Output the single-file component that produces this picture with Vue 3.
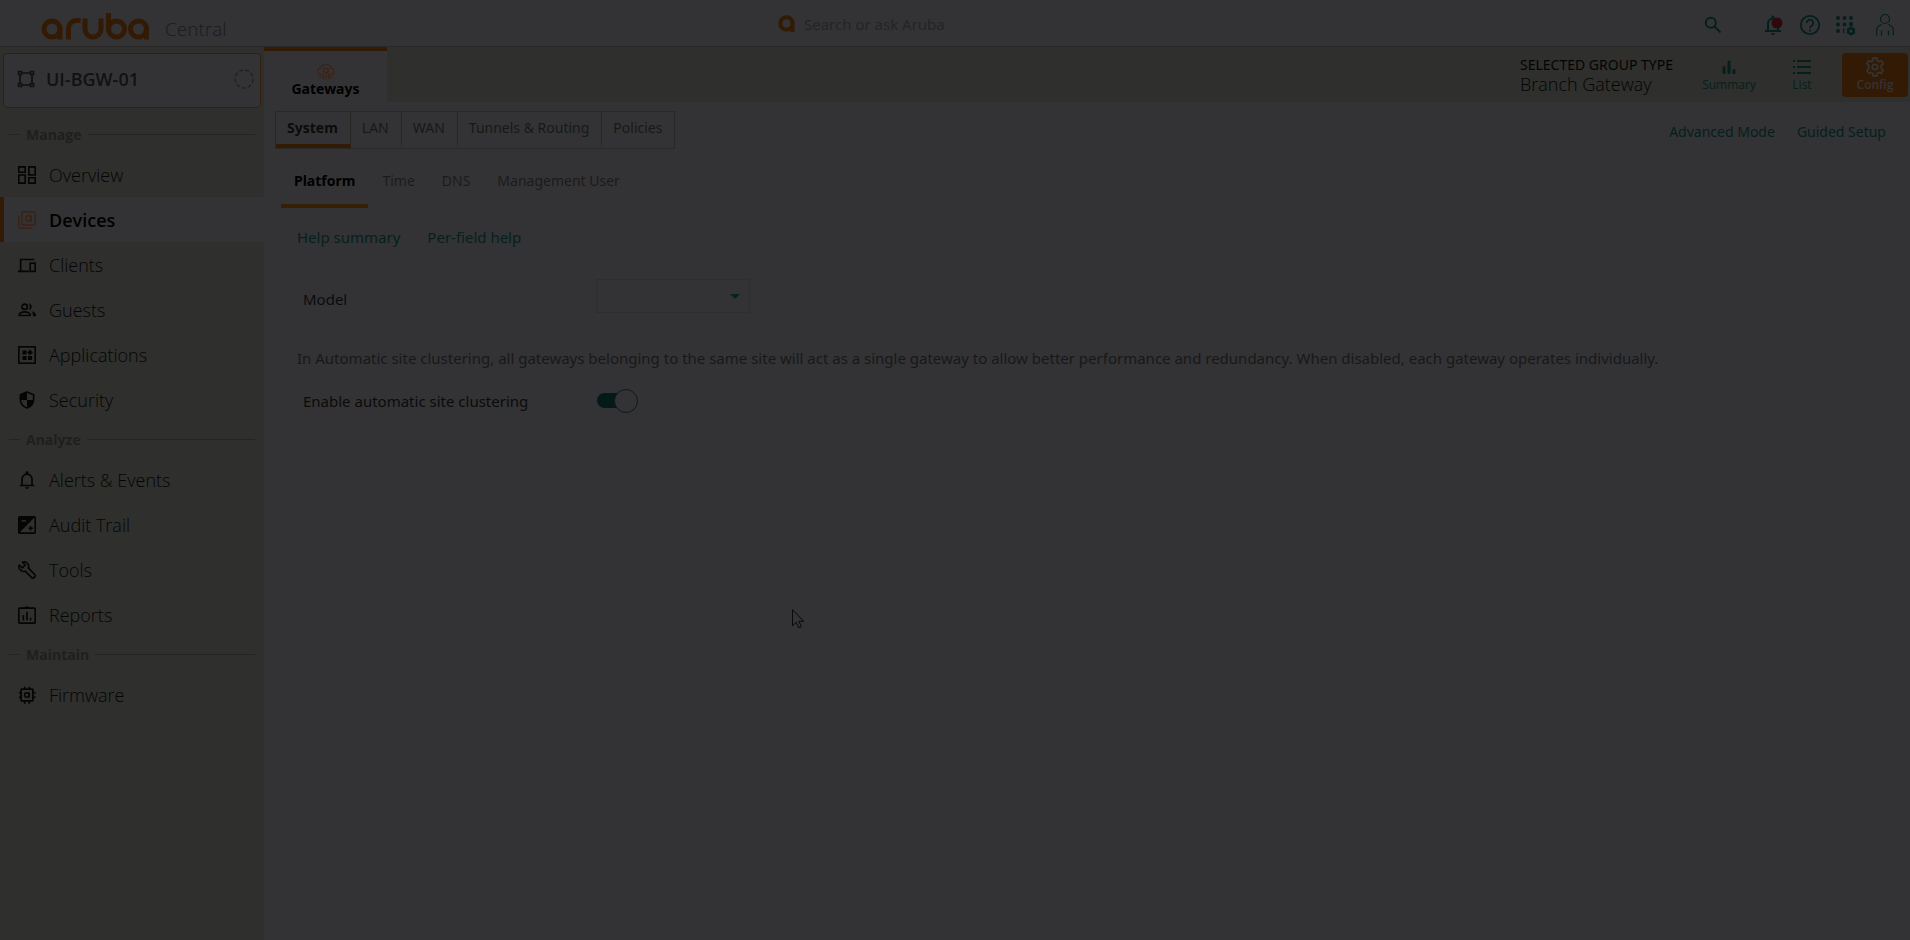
<script setup>
import { ref } from 'vue'

const groups = [
  {
    title: 'Manage',
    items: [
      { name: 'Overview', icon: 'overview' },
      { name: 'Devices', icon: 'devices', active: true },
      { name: 'Clients', icon: 'clients' },
      { name: 'Guests', icon: 'guests' },
      { name: 'Applications', icon: 'applications' },
      { name: 'Security', icon: 'security' },
    ],
  },
  {
    title: 'Analyze',
    items: [
      { name: 'Alerts & Events', icon: 'alerts' },
      { name: 'Audit Trail', icon: 'audit' },
      { name: 'Tools', icon: 'tools' },
      { name: 'Reports', icon: 'reports' },
    ],
  },
  { title: 'Maintain', items: [{ name: 'Firmware', icon: 'firmware' }] },
]

const icons = {
  overview:
    '<g fill="none" stroke="currentColor" stroke-width="1.800"><path d="M2 2h7v6H2zM13 2h7v9h-7zM2 11h7v9H2zM13 14h7v6h-7z"/></g>',
  devices:
    '<g fill="none" stroke="currentColor" stroke-width="1.6"><rect x="5.5" y="2" width="14.5" height="14.5" rx="1.5"/><path d="M2 6v12.5a1.5 1.5 0 0 0 1.5 1.5H16"/><circle cx="12.5" cy="9.3" r="3"/><path d="M15.6 6v6.8"/></g>',
  clients:
    '<g fill="none" stroke="currentColor" stroke-width="1.800"><path d="M19 5H4v12M1 18h12"/><rect x="14.5" y="9" width="5.5" height="9"/></g>',
  guests:
    '<g fill="none" stroke="currentColor" stroke-width="1.800"><circle cx="8.5" cy="7.5" r="3"/><path d="M2.500 17v-1c0-1.500 3-3 6-3s6 1.500 6 3v1z"/></g><path fill="currentColor" d="M13 3.600a4 4 0 0 1 0 7.800c1.500-2.300 1.500-5.500 0-7.800zM15.800 12.300c2.700.5 5 1.800 5 3.700v2h-3.300v-2c0-1.500-.6-2.700-1.700-3.700z"/>',
  applications:
    '<rect x="2" y="2" width="18" height="18" fill="none" stroke="currentColor" stroke-width="1.800"/><path fill="currentColor" d="M6 6h4.500v4.500H6zM6 12h4.500v4.500H6zM12 12h4.500v4.500H12zM14.300 5l3.200 3.200-3.200 3.200-3.200-3.200z"/>',
  security:
    '<path fill="none" stroke="currentColor" stroke-width="1.800" d="M11 2.200l7.300 3V10c0 4.500-3 8.400-7.300 9.800C6.700 18.400 3.700 14.500 3.700 10V5.200z"/><path fill="currentColor" d="M11 2v9H3.500V5zM11 11h7.300c-.5 4.400-3.500 7.900-7.300 9z"/>',
  alerts:
    '<path fill="none" stroke="currentColor" stroke-width="1.800" d="M3 17h16M5.500 17V10a5.500 5.500 0 0 1 11 0v7"/><path fill="currentColor" d="M9.500 4.500V3a1.500 1.500 0 0 1 3 0v1.500zM9 19h4a2 2 0 0 1-4 0z"/>',
  audit:
    '<rect x="2" y="2" width="18" height="18" rx="1" fill="none" stroke="currentColor" stroke-width="1.800"/><path fill="currentColor" d="M2 2h18L2 20z"/><path stroke="#2f2f2d" stroke-width="1.600" d="M5 6.500h5"/><path stroke="currentColor" stroke-width="1.600" d="M12.500 14.500h5M15 12v5"/>',
  tools:
    '<path fill="none" stroke="currentColor" stroke-width="1.800" stroke-linejoin="round" d="M6 2.500c2.500-1 5.500.2 6.500 2.700.5 1.300.5 2.500 0 3.700l7.300 7.300c.5.500.5 1.300 0 1.800l-1.600 1.600c-.5.500-1.300.500-1.800 0L9 12.300c-1.200.4-2.500.4-3.700-.1C2.600 11 1.400 8 2.500 5.500l3.300 3.300L9 5.600z"/>',
  reports:
    '<rect x="2" y="3.500" width="18" height="16.500" rx="1" fill="none" stroke="currentColor" stroke-width="1.800"/><path fill="currentColor" d="M7.500 4.500L8.500 2h1.200a1.500 1.500 0 0 1 2.600 0h1.200l1 2.500z"/><path stroke="currentColor" stroke-width="1.800" d="M7 11v6M11 7.500V17M15 14v3"/>',
  firmware:
    '<g fill="none" stroke="currentColor" stroke-width="2"><rect x="4.500" y="4.500" width="13" height="13" rx="1"/></g><path stroke="currentColor" stroke-width="1.800" d="M8.500 2v2M13.500 2v2M8.500 18v2.500M13.500 18v2.500M2 8.500h2M2 13.500h2M18 8.500h2.500M18 13.500h2.500"/><g fill="none" stroke="currentColor" stroke-width="1.500"><circle cx="10.800" cy="11" r="2.500"/><path d="M13.500 8.200v5.600"/></g>',
}

const sections = ['System', 'LAN', 'WAN', 'Tunnels & Routing', 'Policies']
const pages = ['Platform', 'Time', 'DNS', 'Management User']
const clustering = ref(true)
const model = ref('')
</script>

<template>
  <div class="app">
    <header class="topbar">
      <a class="brand" href="#" aria-label="Aruba Central">
        <svg class="logo" width="110" height="28" viewBox="0 0 110 28" fill="none" stroke="currentColor" stroke-width="5">
          <circle cx="11" cy="16" r="8" />
          <path d="M19 14v12.500M27.500 26.500V15.500a8 8 0 0 1 8-8h4M44 5.500V16a8 8 0 0 0 16 0V5.500M67.500 0v16" />
          <circle cx="75.500" cy="16" r="8" />
          <circle cx="97.500" cy="16" r="8" />
          <path d="M105.500 14v12.500" />
        </svg>
        <span class="product">Central</span>
      </a>
      <label class="search">
        <svg width="18" height="18" viewBox="0 0 18 18" fill="none" stroke="currentColor" stroke-width="4">
          <circle cx="8.500" cy="8.500" r="6.200" />
          <path d="M14.500 8v9" />
        </svg>
        <input type="text" placeholder="Search or ask Aruba" aria-label="Search or ask Aruba" />
      </label>
      <div class="actions">
        <button class="find" aria-label="Search">
          <svg width="18" height="18" viewBox="0 0 18 18" fill="none" stroke="currentColor" stroke-width="2">
            <circle cx="6.800" cy="6.800" r="5" />
            <path d="M10.500 10.500l6 6" />
          </svg>
        </button>
        <button class="bell" aria-label="Notifications">
          <svg width="20" height="22" viewBox="0 0 20 22">
            <path fill="none" stroke="currentColor" stroke-width="2" d="M1 17h16M4 17V9.500a5 5 0 0 1 10 0V17" />
            <path fill="currentColor" d="M7.600 4V3a1.400 1.400 0 0 1 2.800 0v1zM7 19h4a2 2 0 0 1-4 0z" />
            <circle class="alert-dot" cx="13" cy="9" r="5.500" />
          </svg>
        </button>
        <button class="help" aria-label="Help">
          <svg width="22" height="22" viewBox="0 0 22 22" fill="none" stroke="currentColor" stroke-width="1.800">
            <circle cx="11" cy="11" r="9.200" />
            <path d="M7.800 9a3.200 3.200 0 1 1 5.200 2.400c-1.200.9-2 1.300-2 2.900M11 15.500v2" />
          </svg>
        </button>
        <button class="apps" aria-label="Account apps">
          <svg width="22" height="22" viewBox="0 0 22 22" fill="currentColor">
            <circle v-for="n in 7" :key="n" :cx="3 + ((n - 1) % 3) * 6.500" :cy="4 + Math.floor((n - 1) / 3) * 6.500" r="2" />
            <path d="M8 14.500a2.200 2.200 0 0 1 1.800.6l-.8 1.400.8 1.900a2.200 2.200 0 0 1-1.800.5z" />
            <path d="M14 9.500a2 2 0 0 1 3.800 0z" />
            <circle cx="16" cy="17" r="2.800" fill="none" stroke="currentColor" stroke-width="2.400" />
            <path fill="none" stroke="currentColor" stroke-width="2" d="M16 12.500v2M16 19.500v2M12.100 14.800l1.700 1M18.200 18.200l1.700 1M12.100 19.200l1.700-1M18.200 15.800l1.700-1" />
          </svg>
        </button>
        <button class="user" aria-label="User">
          <svg width="20" height="24" viewBox="0 0 20 24" fill="none" stroke="currentColor" stroke-width="1.200">
            <circle cx="10" cy="6" r="4.500" />
            <path d="M1.700 22.500v-5c0-3 2-5 5-6M18.300 22.500v-5c0-3-2-5-5-6M6.500 17.500v5M13.500 17.500v5" />
          </svg>
        </button>
      </div>
    </header>

    <div class="body">
      <aside class="sidebar">
        <button class="group-picker">
          <svg width="18" height="18" viewBox="0 0 18 18" fill="none" stroke="currentColor" stroke-width="1.700">
            <path d="M1.500 1.500h3v3h-3zM13.500 1.500h3v3h-3zM1.500 13.500h3v3h-3zM13.500 13.500h3v3h-3zM4.500 3h9M4.500 15h9M3 4.500v9M15 4.500v9" />
          </svg>
          <span class="group-name">UI-BGW-01</span>
          <svg class="status" width="20" height="20" viewBox="0 0 20 20" fill="none" stroke="currentColor" stroke-width="1.200" stroke-dasharray="4 2.200">
            <circle cx="10" cy="10" r="9" />
          </svg>
        </button>
        <nav aria-label="Main">
          <section v-for="group in groups" :key="group.title">
            <h2>{{ group.title }}</h2>
            <a v-for="item in group.items" :key="item.name" href="#" class="nav-item" :class="{ active: item.active }">
              <svg width="20" height="20" viewBox="0 0 22 22" v-html="icons[item.icon]"></svg>
              <span>{{ item.name }}</span>
            </a>
          </section>
        </nav>
      </aside>

      <main>
        <div class="context">
          <button class="context-tab">
            <svg width="18" height="16" viewBox="0 0 18 16" fill="none" stroke="currentColor" stroke-width="1.100">
              <path d="M6 10.500H4.200a3.200 3.200 0 0 1-.3-6.400C4.500 2 6.500.8 9 .8s4.500 1.300 5 3.300a3.200 3.200 0 0 1-.2 6.400H12" />
              <circle cx="9" cy="6.500" r="2.300" />
              <path d="M11.300 4.200v4.600M9 10v5.500M6.500 10.500V13H2M11.500 10.500V13H16M6.500 13v2M11.500 13v2" />
            </svg>
            <span>Gateways</span>
          </button>
          <div class="context-right">
            <div class="group-type">
              <span class="type-label">SELECTED GROUP TYPE</span>
              <span class="type-value">Branch Gateway</span>
            </div>
            <button class="view">
              <svg width="20" height="20" viewBox="0 0 20 20" stroke="currentColor" stroke-width="3" stroke-linecap="round">
                <path d="M5 10.500v5M10 5v10.500M15 13.500v2" />
              </svg>
              <span>Summary</span>
            </button>
            <button class="view">
              <svg width="20" height="20" viewBox="0 0 20 20" stroke="currentColor" stroke-width="2">
                <path d="M1 4h2M1 10h2M1 16h2M5 4h14M5 10h14M5 16h14" />
              </svg>
              <span>List</span>
            </button>
            <button class="view selected">
              <svg width="20" height="20" viewBox="0 0 20 20" fill="none" stroke="currentColor" stroke-width="1.800" stroke-linejoin="round">
                <path d="M8.200 1h3.600l.4 2.500 1.900 1.100 2.300-1 1.800 3.200-1.900 1.500v3.400l1.900 1.500-1.800 3.200-2.300-1-1.900 1.100-.4 2.500H8.200l-.4-2.500-1.900-1.100-2.300 1-1.800-3.200 1.900-1.500V8.300L1.800 6.800l1.800-3.200 2.300 1 1.900-1.100z" />
                <circle cx="10" cy="10" r="2.700" />
              </svg>
              <span>Config</span>
            </button>
          </div>
        </div>

        <div class="section-row">
          <nav class="sections" aria-label="Sections">
            <button v-for="(s, i) in sections" :key="s" :class="{ active: i === 0 }">{{ s }}</button>
          </nav>
          <div class="modes">
            <a href="#">Advanced Mode</a>
            <a href="#">Guided Setup</a>
          </div>
        </div>

        <nav class="pages" aria-label="Pages">
          <button v-for="(p, i) in pages" :key="p" :class="{ active: i === 0 }">{{ p }}</button>
        </nav>

        <div class="content">
          <div class="help-links">
            <a href="#">Help summary</a>
            <a href="#">Per-field help</a>
          </div>
          <div class="field model">
            <label for="model">Model</label>
            <div class="select-box">
              <select id="model" v-model="model"><option value=""></option></select>
              <svg width="10" height="5" viewBox="0 0 10 5" fill="currentColor"><path d="M0 0h10L5 5z" /></svg>
            </div>
          </div>
          <p>In Automatic site clustering, all gateways belonging to the same site will act as a single gateway to allow better performance and redundancy. When disabled, each gateway operates individually.</p>
          <div class="field">
            <label for="clustering">Enable automatic site clustering</label>
            <input id="clustering" v-model="clustering" class="toggle" type="checkbox" role="switch" />
          </div>
        </div>
      </main>
    </div>

    <svg class="pointer" width="14" height="20" viewBox="0 0 14 20" fill="#333335" stroke="#09090a" stroke-width="1">
      <path d="M.5.700v16l3.700-3.500 2.600 5.600 2.700-1.200-2.600-5.300h4.800z" />
    </svg>
  </div>
</template>

<style>
body {
  background: #333335;
}
</style>

<style scoped>
.app {
  --surface: #333335;
  --shade: #2f2f2d;
  --orange: #331a04;
  --orange-soft: #3b2113;
  --green: #05201c;
  --line: #282827;
  position: relative;
  display: flex;
  flex-direction: column;
  min-height: 100vh;
  background: var(--surface);
  color: #111112;
  font-family: "Noto Sans", "Open Sans", sans-serif;
  font-size: 15px;
  line-height: 20px;
}
button {
  margin: 0;
  padding: 0;
  border: 0;
  background: none;
  color: inherit;
  font: inherit;
}
a {
  color: inherit;
  text-decoration: none;
}
svg {
  display: block;
  flex: none;
}
.topbar {
  display: grid;
  grid-template-columns: 1fr auto 1fr;
  align-items: center;
  height: 46px;
  border-bottom: 1px solid var(--line);
}
.brand {
  display: flex;
  align-items: center;
  gap: 14px;
  padding: 7px 0 0 41px;
}
.logo {
  color: var(--orange);
}
.product {
  padding-top: 5px;
  font-family: "Open Sans", sans-serif;
  font-size: 19px;
  font-weight: 300;
  line-height: 28px;
  color: #1a1a1b;
}
.search {
  display: flex;
  align-items: center;
  gap: 8px;
  padding-top: 2px;
  color: var(--orange);
}
.search input {
  width: 328px;
  padding: 0;
  border: 0;
  outline: 0;
  background: none;
  font: inherit;
  color: #111112;
}
.search input::placeholder {
  color: #242425;
  opacity: 1;
}
.actions {
  display: flex;
  align-items: center;
  justify-content: flex-end;
  gap: 14px;
  padding: 3px 15px 0 0;
  color: var(--green);
}
.find {
  margin-right: 28px;
}
.bell {
  margin-right: 1px;
}
.user {
  margin-left: 4px;
}
.alert-dot {
  fill: #2e0a0e;
}
.body {
  display: flex;
  flex: 1;
}
.sidebar {
  flex: none;
  width: 264px;
  box-sizing: border-box;
  padding-top: 6px;
  background: var(--shade);
  font-family: "Open Sans", sans-serif;
}
.group-picker {
  display: flex;
  align-items: center;
  gap: 11px;
  width: 258px;
  height: 55px;
  margin: 0 3px 9px;
  padding: 0 6px 3px 13px;
  box-sizing: border-box;
  border: 1px solid #342009;
  border-radius: 4px;
  background: var(--surface);
}
.group-name {
  flex: 1;
  text-align: left;
  font-size: 18px;
  font-weight: 600;
}
.status {
  color: #1f1f1f;
}
h2 {
  display: flex;
  align-items: center;
  gap: 6px;
  height: 35px;
  margin: 0 9px;
  font-size: 14px;
  font-weight: 700;
  color: #1f1f1e;
}
h2::before,
h2::after {
  content: "";
  height: 1px;
  background: #242423;
}
h2::before {
  width: 11px;
}
h2::after {
  flex: 1;
}
.nav-item {
  display: flex;
  align-items: center;
  gap: 12px;
  height: 45px;
  padding-left: 13px;
  border-left: 4px solid transparent;
  font-size: 18px;
  font-weight: 300;
  color: #050505;
}
.nav-item.active {
  border-left-color: var(--orange);
  background: var(--surface);
  font-weight: 600;
  color: #000;
}
.nav-item.active svg {
  color: var(--orange-soft);
}
main {
  flex: 1;
  min-width: 0;
}
.context {
  display: flex;
  justify-content: space-between;
  height: 55px;
  background: var(--shade);
}
.context-tab {
  display: flex;
  flex-direction: column;
  align-items: center;
  width: 123px;
  padding-top: 13px;
  border-top: 4px solid var(--orange);
  background: var(--surface);
  font-size: 14px;
  font-weight: 700;
  line-height: 18px;
  color: #000;
}
.context-tab svg {
  color: var(--orange-soft);
}
.context-right {
  display: flex;
  align-items: center;
  padding-right: 2px;
}
.group-type {
  display: flex;
  flex-direction: column;
  margin-right: 16px;
  color: #040404;
}
.type-label {
  font-size: 14px;
  line-height: 18px;
}
.type-value {
  font-family: "Open Sans", sans-serif;
  font-size: 18px;
  font-weight: 300;
  line-height: 20px;
}
.view {
  display: flex;
  flex-direction: column;
  align-items: center;
  justify-content: center;
  width: 66px;
  height: 44px;
  margin-left: 7px;
  border-radius: 4px;
  font-family: "Open Sans", sans-serif;
  font-size: 12px;
  line-height: 16px;
  color: var(--green);
}
.view.selected {
  background: var(--orange);
  color: #353331;
  font-weight: 600;
}
.section-row {
  display: flex;
  align-items: center;
  justify-content: space-between;
  padding: 9px 24px 0 11px;
  font-size: 14px;
}
.sections {
  display: flex;
  border: 1px solid var(--line);
}
.sections button {
  height: 36px;
  padding: 0 12px 0 11px;
  border-right: 1px solid var(--line);
  border-bottom: 4px solid transparent;
  line-height: 32px;
  color: #181818;
}
.sections button:last-child {
  border-right: 0;
}
.sections .active {
  border-bottom-color: var(--orange);
  font-weight: 700;
  color: #0b0b0b;
}
.modes {
  display: flex;
  gap: 22px;
  padding-top: 4px;
  color: var(--green);
}
.pages {
  display: flex;
  gap: 1px;
  padding: 7px 0 0 17px;
  font-size: 14px;
}
.pages button {
  height: 52px;
  padding: 2px 13px 0;
  border-bottom: 4px solid transparent;
  color: #1b1b1b;
}
.pages .active {
  border-bottom-color: #352003;
  font-weight: 700;
  color: #000;
}
.content {
  padding: 19px 33px;
}
.help-links {
  display: flex;
  gap: 27px;
  color: var(--green);
}
.field {
  display: flex;
  align-items: center;
  padding-left: 6px;
  color: #0b0b0c;
}
.field label {
  width: 293px;
}
.model {
  margin-top: 32px;
}
.model label {
  padding-top: 6px;
}
.select-box {
  position: relative;
  color: #04241f;
}
.select-box select {
  display: block;
  width: 154px;
  height: 34px;
  border: 1px solid #2e2e2e;
  border-radius: 0;
  appearance: none;
  background: var(--surface);
  font: inherit;
}
.select-box svg {
  position: absolute;
  top: 15px;
  right: 10px;
  pointer-events: none;
}
p {
  margin: 35px 0 21px;
  color: #181818;
}
.toggle {
  position: relative;
  width: 42px;
  height: 24px;
  margin: 0;
  appearance: none;
}
.toggle::before {
  content: "";
  position: absolute;
  inset: 4px 8px 5px 1px;
  border-radius: 8px;
  background: #031a18;
}
.toggle::after {
  content: "";
  position: absolute;
  top: 0;
  left: 0;
  width: 24px;
  height: 24px;
  box-sizing: border-box;
  border: 1px solid #0c1a18;
  border-radius: 50%;
  background: var(--surface);
}
.toggle:checked::after {
  left: 18px;
}
.pointer {
  position: absolute;
  top: 609px;
  left: 792px;
  pointer-events: none;
}
</style>
